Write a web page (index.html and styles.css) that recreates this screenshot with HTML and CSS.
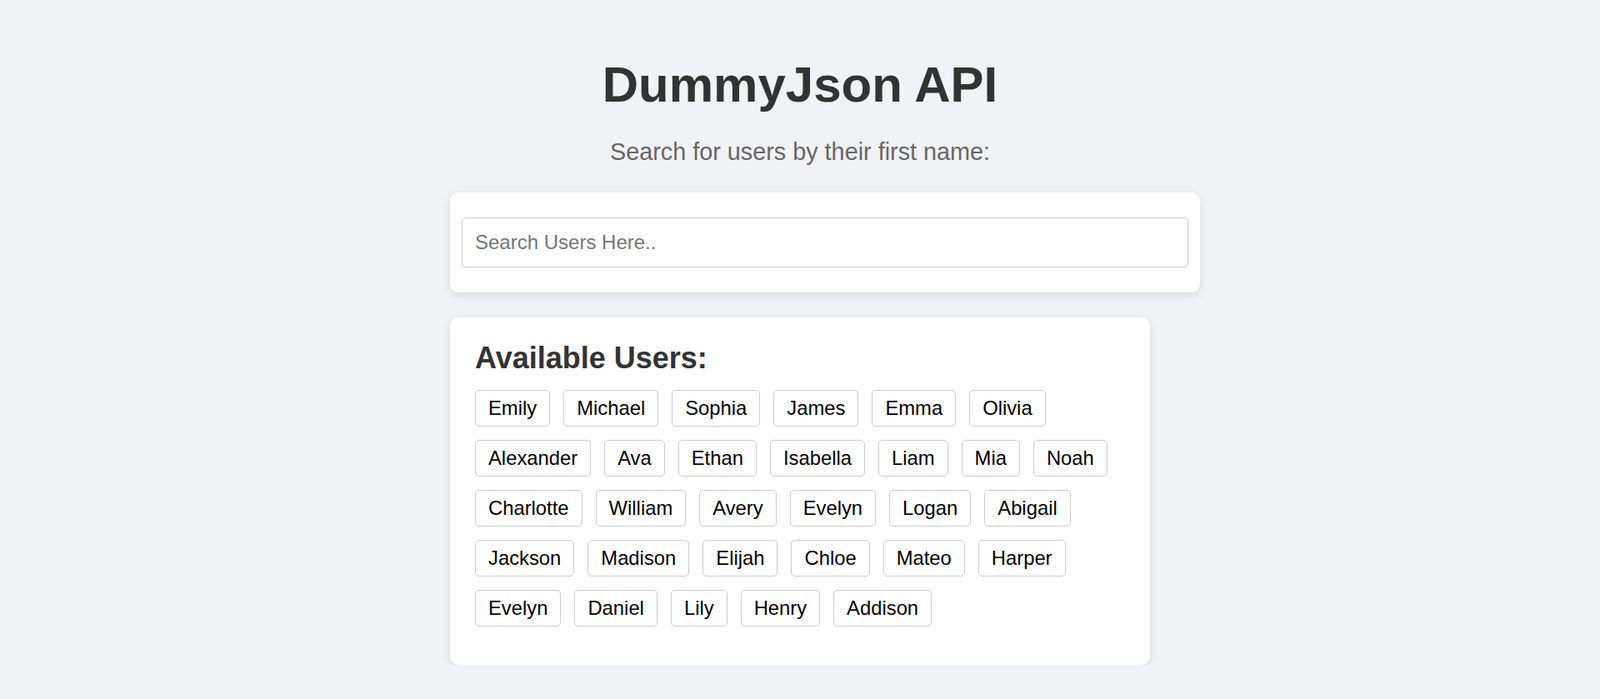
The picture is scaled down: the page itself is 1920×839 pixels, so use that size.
FILE: index.html
```html
<!DOCTYPE html>
<html lang="en">
<head>
<meta charset="utf-8">
<title>DummyJson API</title>
<link rel="stylesheet" href="styles.css">
</head>
<body>
<div class="container">
  <h1 class="title">DummyJson API</h1>
  <p class="subtitle">Search for users by their first name:</p>
  <div class="card search-card">
    <input class="search-input" type="text" placeholder="Search Users Here..">
  </div>
  <div class="card users-card">
    <h2 class="users-heading">Available Users:</h2>
    <div class="tags">
      <span class="tag">Emily</span>
      <span class="tag">Michael</span>
      <span class="tag">Sophia</span>
      <span class="tag">James</span>
      <span class="tag">Emma</span>
      <span class="tag">Olivia</span>
      <span class="tag">Alexander</span>
      <span class="tag">Ava</span>
      <span class="tag">Ethan</span>
      <span class="tag">Isabella</span>
      <span class="tag">Liam</span>
      <span class="tag">Mia</span>
      <span class="tag">Noah</span>
      <span class="tag">Charlotte</span>
      <span class="tag">William</span>
      <span class="tag">Avery</span>
      <span class="tag">Evelyn</span>
      <span class="tag">Logan</span>
      <span class="tag">Abigail</span>
      <span class="tag">Jackson</span>
      <span class="tag">Madison</span>
      <span class="tag">Elijah</span>
      <span class="tag">Chloe</span>
      <span class="tag">Mateo</span>
      <span class="tag">Harper</span>
      <span class="tag">Evelyn</span>
      <span class="tag">Daniel</span>
      <span class="tag">Lily</span>
      <span class="tag">Henry</span>
      <span class="tag">Addison</span>
    </div>
  </div>
</div>
</body>
</html>
```

FILE: styles.css
```css
* {
  box-sizing: border-box;
}

html, body {
  margin: 0;
  padding: 0;
}

body {
  background: #f0f2f5;
  font-family: "Liberation Sans", Arial, sans-serif;
  color: #333;
}

.container {
  width: 840px;
  margin: 0 auto;
  padding-top: 67px;
}

.title {
  margin: 0 0 30px;
  font-size: 60px;
  font-weight: 700;
  line-height: 69px;
  text-align: center;
  color: #333;
}

.subtitle {
  margin: 0 0 32px;
  font-size: 28.8px;
  line-height: 33px;
  text-align: center;
  color: #666;
}

.card {
  background: #fff;
  border-radius: 10px;
  box-shadow: 0 4px 12px rgba(0, 0, 0, 0.1);
}

.search-card {
  width: 900px;
  padding: 30px 14px;
  margin-bottom: 30px;
}

.search-input {
  display: block;
  width: 100%;
  height: 60px;
  padding: 0 15px;
  border: 1px solid #ccc;
  border-radius: 5px;
  font-family: "Liberation Sans", Arial, sans-serif;
  font-size: 24px;
  color: #333;
  background: #fff;
  outline: none;
}

.search-input::placeholder {
  color: #757575;
}

.users-card {
  width: 840px;
  padding: 28px 30px 30px;
}

.users-heading {
  margin: 0 0 18px;
  font-size: 36px;
  line-height: 41px;
  font-weight: 700;
  color: #333;
}

.tags {
  display: flex;
  flex-wrap: wrap;
}

.tag {
  display: block;
  margin: 0 16px 16px 0;
  padding: 7px 15px;
  font-size: 23.8px;
  line-height: 28px;
  color: #000;
  background: #fff;
  border: 1px solid #ccc;
  border-radius: 5px;
}
```
